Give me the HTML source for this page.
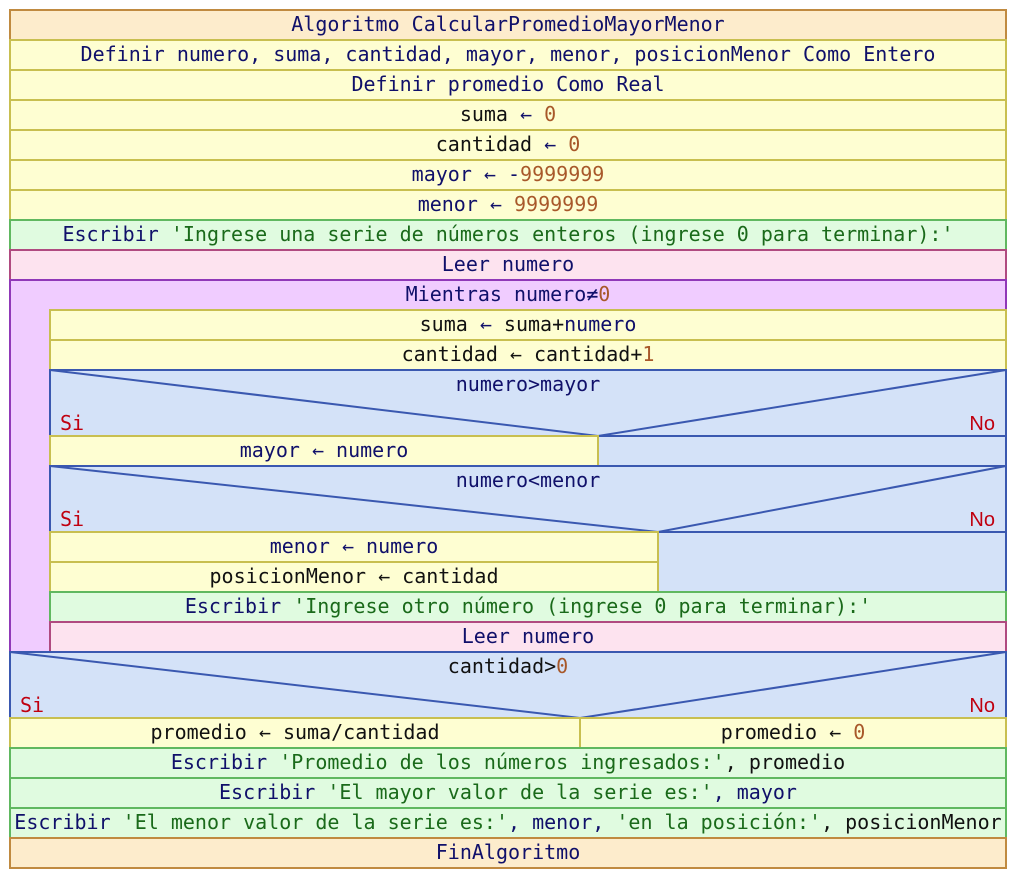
<!DOCTYPE html>
<html><head><meta charset="utf-8"><style>
html,body{margin:0;padding:0;background:#fff;width:1016px;height:878px;overflow:hidden}
svg{display:block}
text{font-family:"DejaVu Sans Mono","Liberation Mono",monospace;font-size:20px}
.k{fill:#10106a}.v{fill:#111}.n{fill:#a8582a}.s{fill:#1a6a1a}.r{fill:#c00010}
.ar{font-size:14px}
</style></head><body>
<svg width="1016" height="878" viewBox="0 0 1016 878">
<!-- header -->
<rect x="10" y="10" width="996" height="30" fill="#fdeccc" stroke="#c08a40" stroke-width="2"/>
<!-- yellow defs -->
<g fill="#fefed2" stroke="#c8bf50" stroke-width="2">
<rect x="10" y="40" width="996" height="30"/>
<rect x="10" y="70" width="996" height="30"/>
<rect x="10" y="100" width="996" height="30"/>
<rect x="10" y="130" width="996" height="30"/>
<rect x="10" y="160" width="996" height="30"/>
<rect x="10" y="190" width="996" height="30"/>
</g>
<rect x="10" y="220" width="996" height="30" fill="#e0fbe0" stroke="#60b860" stroke-width="2"/>
<rect x="10" y="250" width="996" height="30" fill="#fde3ef" stroke="#b04a80" stroke-width="2"/>
<!-- loop -->
<rect x="10" y="280" width="996" height="372" fill="#f0ccff" stroke="#9038b8" stroke-width="2"/>
<g fill="#fefed2" stroke="#c8bf50" stroke-width="2">
<rect x="50" y="310" width="956" height="30"/>
<rect x="50" y="340" width="956" height="30"/>
</g>
<!-- if1 -->
<rect x="50" y="370" width="956" height="96" fill="#d4e2f8" stroke="#3a58b0" stroke-width="2"/>
<polyline points="50,370 598,436 1006,370" fill="none" stroke="#3a58b0" stroke-width="2"/>
<line x1="50" y1="436" x2="1006" y2="436" stroke="#3a58b0" stroke-width="2"/>
<rect x="50" y="436" width="548" height="30" fill="#fefed2" stroke="#c8bf50" stroke-width="2"/>
<!-- if2 -->
<rect x="50" y="466" width="956" height="126" fill="#d4e2f8" stroke="#3a58b0" stroke-width="2"/>
<polyline points="50,466 658,532 1006,466" fill="none" stroke="#3a58b0" stroke-width="2"/>
<line x1="50" y1="532" x2="1006" y2="532" stroke="#3a58b0" stroke-width="2"/>
<g fill="#fefed2" stroke="#c8bf50" stroke-width="2">
<rect x="50" y="532" width="608" height="30"/>
<rect x="50" y="562" width="608" height="30"/>
</g>
<rect x="50" y="592" width="956" height="30" fill="#e0fbe0" stroke="#60b860" stroke-width="2"/>
<rect x="50" y="622" width="956" height="30" fill="#fde3ef" stroke="#b04a80" stroke-width="2"/>
<!-- if3 -->
<rect x="10" y="652" width="996" height="96" fill="#d4e2f8" stroke="#3a58b0" stroke-width="2"/>
<polyline points="10,652 580,718 1006,652" fill="none" stroke="#3a58b0" stroke-width="2"/>
<g fill="#fefed2" stroke="#c8bf50" stroke-width="2">
<rect x="10" y="718" width="570" height="30"/>
<rect x="580" y="718" width="426" height="30"/>
</g>
<g fill="#e0fbe0" stroke="#60b860" stroke-width="2">
<rect x="10" y="748" width="996" height="30"/>
<rect x="10" y="778" width="996" height="30"/>
<rect x="10" y="808" width="996" height="30"/>
</g>
<rect x="10" y="838" width="996" height="30" fill="#fdeccc" stroke="#c08a40" stroke-width="2"/>

<g text-anchor="middle">
<text x="508" y="31"><tspan class="k">Algoritmo CalcularPromedioMayorMenor</tspan></text>
<text x="508" y="61" class="k">Definir numero, suma, cantidad, mayor, menor, posicionMenor Como Entero</text>
<text x="508" y="91" class="k">Definir promedio Como Real</text>
<text x="508" y="121"><tspan class="v">suma </tspan><tspan class="k">←</tspan><tspan class="n"> 0</tspan></text>
<text x="508" y="151"><tspan class="v">cantidad </tspan><tspan class="k">←</tspan><tspan class="n"> 0</tspan></text>
<text x="508" y="181"><tspan class="k">mayor ← -</tspan><tspan class="n">9999999</tspan></text>
<text x="508" y="211"><tspan class="k">menor ← </tspan><tspan class="n">9999999</tspan></text>
<text x="508" y="241"><tspan class="k">Escribir </tspan><tspan class="s">'Ingrese una serie de números enteros (ingrese 0 para terminar):'</tspan></text>
<text x="508" y="271" class="k">Leer numero</text>
<text x="508" y="301"><tspan class="k">Mientras numero≠</tspan><tspan class="n">0</tspan></text>
<text x="528" y="331"><tspan class="v">suma </tspan><tspan class="k">←</tspan><tspan class="v"> suma+</tspan><tspan class="k">numero</tspan></text>
<text x="528" y="361"><tspan class="v">cantidad ← cantidad+</tspan><tspan class="n">1</tspan></text>
<text x="528" y="391" class="k">numero&gt;mayor</text>
<text x="324" y="457" class="k">mayor ← numero</text>
<text x="528" y="487" class="k">numero&lt;menor</text>
<text x="354" y="553" class="k">menor ← numero</text>
<text x="354" y="583"><tspan class="v">posicionMenor ← cantidad</tspan></text>
<text x="528" y="613"><tspan class="k">Escribir </tspan><tspan class="s">'Ingrese otro número (ingrese 0 para terminar):'</tspan></text>
<text x="528" y="643" class="k">Leer numero</text>
<text x="508" y="673"><tspan class="v">cantidad&gt;</tspan><tspan class="n">0</tspan></text>
<text x="295" y="739" class="v">promedio ← suma/cantidad</text>
<text x="793" y="739"><tspan class="v">promedio ← </tspan><tspan class="n">0</tspan></text>
<text x="508" y="769"><tspan class="k">Escribir </tspan><tspan class="s">'Promedio de los números ingresados:'</tspan><tspan class="v">, promedio</tspan></text>
<text x="508" y="799"><tspan class="k">Escribir </tspan><tspan class="s">'El mayor valor de la serie es:'</tspan><tspan class="k">, mayor</tspan></text>
<text x="508" y="829"><tspan class="k">Escribir </tspan><tspan class="s">'El menor valor de la serie es:'</tspan><tspan class="k">, menor, </tspan><tspan class="s">'en la posición:'</tspan><tspan class="v">, posicionMenor</tspan></text>
<text x="508" y="859" class="k">FinAlgoritmo</text>
</g>
<text x="60" y="430" class="r">Si</text>
<text x="60" y="526" class="r">Si</text>
<text x="20" y="712" class="r">Si</text>
<g text-anchor="end" style="font-family:'Liberation Sans',sans-serif">
<text x="995" y="430" class="r" style="font-family:'Liberation Sans',sans-serif">No</text>
<text x="995" y="526" class="r" style="font-family:'Liberation Sans',sans-serif">No</text>
<text x="995" y="712" class="r" style="font-family:'Liberation Sans',sans-serif">No</text>
</g>
</svg>
</body></html>
